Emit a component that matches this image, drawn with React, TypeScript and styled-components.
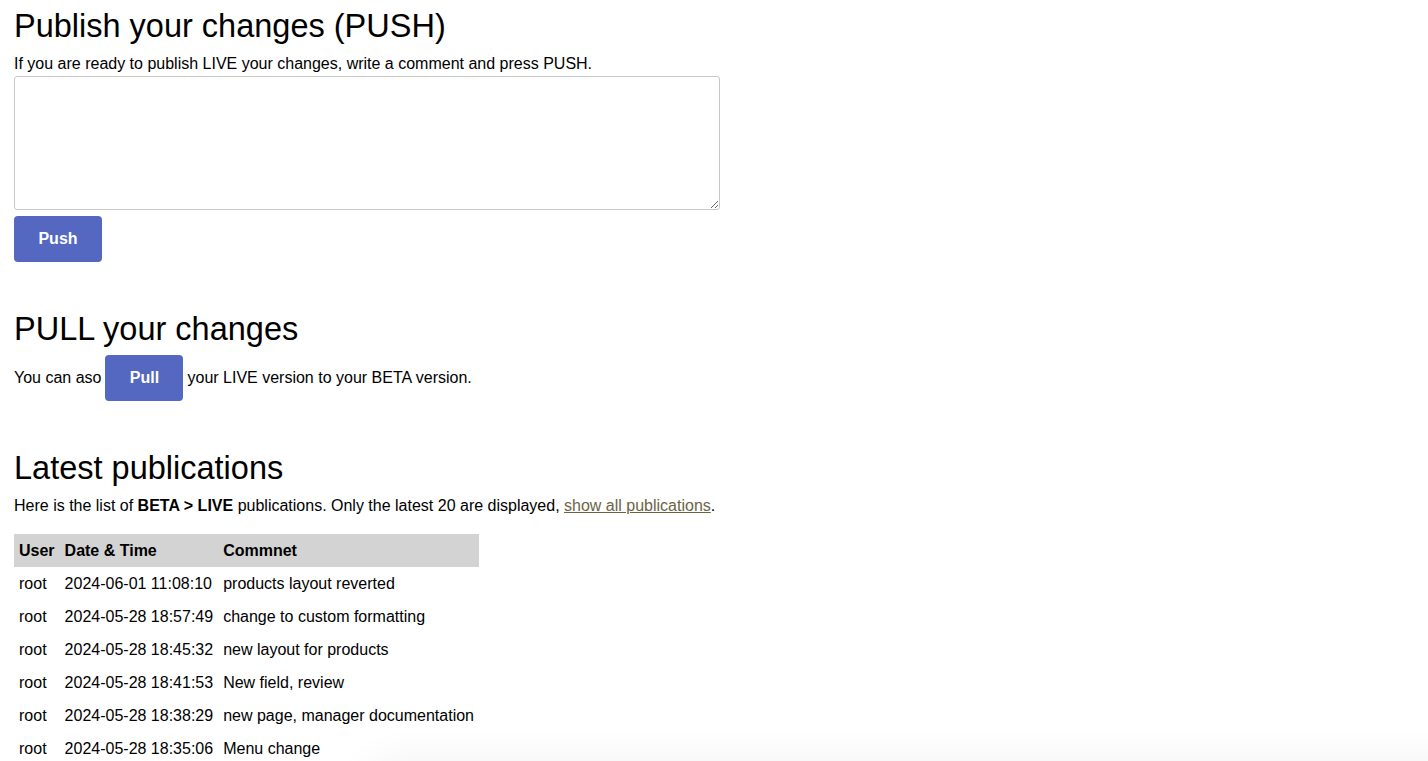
import styled, { createGlobalStyle } from 'styled-components';

const GlobalStyle = createGlobalStyle`
  html, body {
    margin: 0;
    padding: 0;
    background: #ffffff;
  }
  body {
    font-family: "Liberation Sans", Arial, Helvetica, sans-serif;
    font-size: 16px;
    color: #000000;
  }
`;

type Publication = {
  user: string;
  date: string;
  comment: string;
};

const publications: Publication[] = [
  { user: 'root', date: '2024-06-01 11:08:10', comment: 'products layout reverted' },
  { user: 'root', date: '2024-05-28 18:57:49', comment: 'change to custom formatting' },
  { user: 'root', date: '2024-05-28 18:45:32', comment: 'new layout for products' },
  { user: 'root', date: '2024-05-28 18:41:53', comment: 'New field, review' },
  { user: 'root', date: '2024-05-28 18:38:29', comment: 'new page, manager documentation' },
  { user: 'root', date: '2024-05-28 18:35:06', comment: 'Menu change' },
];

export default function App() {
  return (
    <>
      <GlobalStyle />
      <Page>
        {/* push */}
        <Section>
          <Title>Publish your changes (PUSH)</Title>
          <Text>If you are ready to publish LIVE your changes, write a comment and press PUSH.</Text>
          <CommentBox />
          <ActionButton $width={88}>Push</ActionButton>
        </Section>

        {/* pull */}
        <Section>
          <Title>PULL your changes</Title>
          <InlineRow>
            <span>You can aso</span>
            <ActionButton $width={78}>Pull</ActionButton>
            <span>your LIVE version to your BETA version.</span>
          </InlineRow>
        </Section>

        {/* list */}
        <Section>
          <Title>Latest publications</Title>
          <Text>
            Here is the list of <b>BETA &gt; LIVE</b> publications. Only the latest 20 are displayed,{' '}
            <Link href="#">show all publications</Link>.
          </Text>
          <Table>
            <thead>
              <tr>
                <Th>User</Th>
                <Th>Date &amp; Time</Th>
                <Th>Commnet</Th>
              </tr>
            </thead>
            <tbody>
              {publications.map((p) => (
                <tr key={p.date}>
                  <Td>{p.user}</Td>
                  <Td>{p.date}</Td>
                  <Td>{p.comment}</Td>
                </tr>
              ))}
            </tbody>
          </Table>
        </Section>
      </Page>
      <BottomShade />
    </>
  );
}

const Page = styled.main`
  padding: 8px 14px 0 14px;
  display: flex;
  flex-direction: column;
  gap: 49px;
`;

const Section = styled.section`
  display: flex;
  flex-direction: column;
  align-items: flex-start;
`;

const Title = styled.h1`
  margin: 0 0 7px 0;
  font-size: 32.5px;
  line-height: 37px;
  font-weight: 400;
`;

const Text = styled.p`
  margin: 3px 0 3px 0;
  font-size: 16px;
  line-height: 18px;
`;

const CommentBox = styled.textarea`
  display: block;
  box-sizing: border-box;
  width: 706px;
  height: 134px;
  margin: 0 0 6px 0;
  border: 1px solid #c8c8c8;
  border-radius: 3px;
  background: #ffffff;
  font-family: inherit;
  font-size: 16px;
`;

const ActionButton = styled.button<{ $width: number }>`
  width: ${({ $width }) => $width}px;
  height: 46px;
  border: none;
  border-radius: 4px;
  background: #5468c2;
  color: #ffffff;
  font-family: "Liberation Sans", Arial, Helvetica, sans-serif;
  font-size: 16px;
  font-weight: 700;
  cursor: pointer;
`;

const InlineRow = styled.div`
  display: flex;
  align-items: center;
  gap: 4px;
  font-size: 16px;
  line-height: 18px;
`;

const Link = styled.a`
  color: #6b6444;
  text-decoration: underline;
`;

const Table = styled.table`
  margin-top: 16px;
  border-collapse: collapse;
  font-size: 16px;
  line-height: 18px;
  text-align: left;
`;

const Th = styled.th`
  padding: 8px 5px 7px 5px;
  background: #d3d3d3;
  font-weight: 700;
`;

const Td = styled.td`
  padding: 8px 5px 7px 5px;
  white-space: nowrap;
`;

const BottomShade = styled.div`
  position: fixed;
  left: 360px;
  right: -40px;
  bottom: -60px;
  height: 60px;
  box-shadow: 0 0 40px rgba(0, 0, 0, 0.06);
  border-top-left-radius: 40px;
  background: #ffffff;
`;
